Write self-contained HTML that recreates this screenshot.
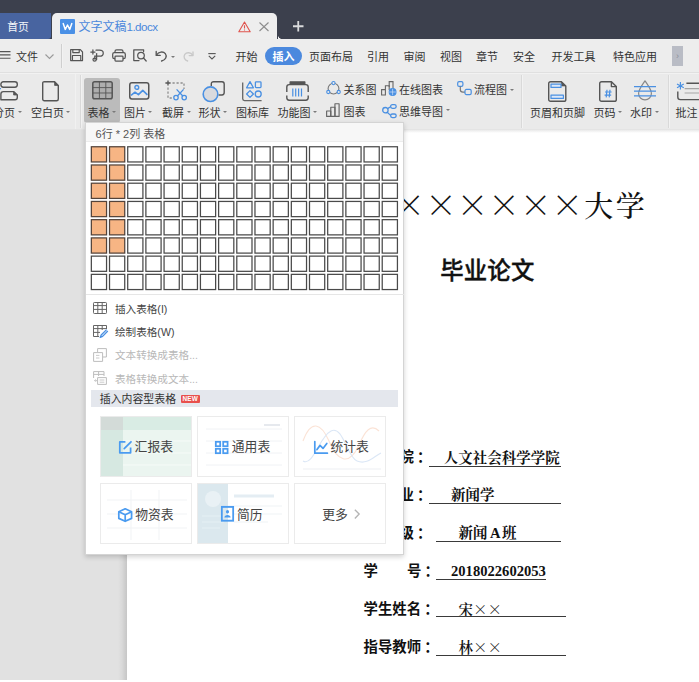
<!DOCTYPE html>
<html lang="zh-CN">
<head>
<meta charset="utf-8">
<title>文字文稿1.docx</title>
<style>
*{margin:0;padding:0;box-sizing:border-box}
html,body{width:699px;height:682px;overflow:hidden;background:#e1e1e1}
body{position:relative;font-family:"Liberation Sans","Noto Sans CJK SC",sans-serif;font-size:11px;color:#333}
.a{position:absolute;white-space:nowrap}
svg{position:absolute;overflow:visible}
#titlebar{left:0;top:0;width:699px;height:39px;background:#3c404d}
#home{left:0;top:12.5px;width:50.6px;height:26.3px;padding-top:1.4px;background:#4864a0;color:#f4f6fa;font-size:10.8px;line-height:26px;padding-left:7.2px;border-radius:0 0 3px 0}
#doctab{left:51.7px;top:12.6px;width:225.8px;height:27.4px;background:#eeeeee;border-radius:5px 5px 0 0}
#doctitle{left:78.5px;top:19px;font-size:12px;line-height:16px;color:#4a88dc}
#menubar{left:0;top:39px;width:699px;height:34px;background:#ededed;border-bottom:1px solid #e0e0e0}
#ribbon{left:0;top:73px;width:699px;height:57px;background:#eaeaea;border-top:1px solid #f2f2f2;border-bottom:1px solid #e4e4e4}
.m{top:48.5px;font-size:11px;line-height:16px;color:#333}
.r{font-size:11px;line-height:14px;color:#333}
#page{left:127.3px;top:130px;width:580px;height:560px;background:#fff}
#pshadow{left:118px;top:130px;width:9.3px;height:552px;background:linear-gradient(to right,rgba(0,0,0,0),rgba(0,0,0,0.03) 40%,rgba(0,0,0,0.12))}
#bottomstrip{left:0;top:679.8px;width:699px;height:3px;background:#fff}
#ptop{left:127.3px;top:130px;width:580px;height:3px;background:linear-gradient(to bottom,#eaeaea,#fff)}
#panel{left:84.6px;top:121.6px;width:319.4px;height:433px;background:#fff;border:1px solid #d4d4d4;box-shadow:0 2px 5px rgba(0,0,0,.18)}

.dd{width:0;height:0;border-left:2.2px solid transparent;border-right:2.2px solid transparent;border-top:2.6px solid #7a7a7a}
#pill{left:265px;top:46.5px;width:37px;height:18px;border-radius:9px;background:#4b89de}
#scrollbtn{left:672px;top:46px;width:11px;height:20px;background:#b9bcc5;color:#8d9099;font-size:9px;line-height:20px;text-align:center}
.vd{width:1px;background:#d9d9d9;box-shadow:1px 0 0 #f2f2f2}
#tblbtn{left:84px;top:78px;width:36.2px;height:44.6px;background:#bbbbbb;border-radius:3px}

#phead{left:85.6px;top:122.6px;width:317.4px;height:19px;background:#f7f7f7;border-bottom:1px solid #ececec;font-size:11px;line-height:23px;color:#555;padding-left:10px}
.pi{left:115px;font-size:10.6px;line-height:16px;color:#444}
.pi.dis{color:#b8b8b8}
#sect{left:90.5px;top:389.5px;width:307px;height:17.5px;background:#e4e7ed;font-size:10.9px;line-height:18px;color:#333;padding-left:9.3px}
#newb{left:180.8px;top:394.5px;width:18.8px;height:8.6px;background:#e8504d;border-radius:1px;color:#fff;font-size:6.4px;line-height:8.8px;font-weight:bold;text-align:center;letter-spacing:0.2px}
.th{width:92.2px;height:61px;border:1px solid #ebebeb;background:#fff;overflow:hidden}
.tl{font-size:12.8px;line-height:18px;color:#444}

.doc{font-family:"Liberation Serif","Noto Serif CJK SC",serif;color:#111}
#h1{left:330.1px;top:184.2px;font-size:29px;line-height:46px;height:46px;font-weight:500;display:flex;align-items:center}
#h1 i{display:block;width:31.6px;height:46px;text-align:center;font-style:normal}
#h1 i.x,.cx{font-family:"Noto Serif CJK SC","Liberation Serif",serif}
#h1 i.x{font-size:32px;font-weight:600;position:relative;top:-4.6px}
#h2{left:440.2px;top:255px;font-family:"Liberation Sans","Noto Sans CJK SC",sans-serif;font-weight:500;-webkit-text-stroke:0.35px #111;font-size:23.4px;letter-spacing:0.2px;line-height:32px;color:#111}
.lab{left:363.5px;font-family:"Liberation Sans","Noto Sans CJK SC",sans-serif;font-weight:bold;font-size:14.4px;line-height:20px;color:#111}
.val{font-size:14.5px;line-height:20px;font-weight:700}
.val.n{font-weight:600}
.ul{height:1.3px;background:#3a3a3a}
</style>
</head>
<body>
<div class="a" id="titlebar"></div>
<div class="a" id="home">首页</div>
<div class="a" id="doctab"></div>
<div class="a" style="left:277.5px;top:35px;width:4px;height:4px;background:radial-gradient(circle at 100% 0,rgba(238,238,238,0) 3.6px,#eeeeee 4.2px)"></div><div class="a" id="doctitle">文字文稿<span style="font-size:11.6px;letter-spacing:-0.55px">1.docx</span></div>
<div class="a" id="menubar"></div>
<div class="a" id="ribbon"></div>

<!-- tab icons -->
<svg style="left:60px;top:19px" width="15" height="15" viewBox="0 0 15 15"><rect width="15" height="15" rx="1" fill="#4a90e6"/><path d="M3.2 4.6 L5.3 10.4 L7.5 6 L9.7 10.4 L11.8 4.6" fill="none" stroke="#fff" stroke-width="1.5" stroke-linejoin="round" stroke-linecap="round"/></svg>
<svg style="left:238px;top:20.5px" width="13" height="11.5" viewBox="0 0 13 11.5"><path d="M6.5 1 L12.2 10.8 L0.8 10.8 Z" fill="none" stroke="#e0544e" stroke-width="1.1" stroke-linejoin="round"/><path d="M6.5 4.2 V7.6 M6.5 8.6 V9.6" stroke="#e0544e" stroke-width="1.1"/></svg>
<svg style="left:259px;top:22px" width="10" height="9.5" viewBox="0 0 10 9.5"><path d="M0.5 0.5 L9.5 9 M9.5 0.5 L0.5 9" stroke="#8c8c8c" stroke-width="1.1"/></svg>
<svg style="left:293px;top:21px" width="10.5" height="10.5" viewBox="0 0 10.5 10.5"><path d="M5.25 0 V10.5 M0 5.25 H10.5" stroke="#d9dadc" stroke-width="1.8"/></svg>
<!-- menu bar -->
<svg style="left:0;top:51px" width="11" height="8" viewBox="0 0 11 8"><path d="M0 0.6 H10.5 M0 3.9 H10.5 M0 7.2 H10.5" stroke="#555" stroke-width="1.1"/></svg>
<div class="a m" style="left:16px">文件</div>
<svg style="left:45px;top:53.5px" width="9" height="5.5" viewBox="0 0 9 5.5"><path d="M0.5 0.5 L4.5 4.5 L8.5 0.5" fill="none" stroke="#9a9a9a" stroke-width="1.1"/></svg>
<div class="a vd" style="left:61px;top:44px;height:24px;background:#cfcfcf"></div>
<div class="a" id="pill"></div>
<div class="a m" style="left:235.5px">开始</div>
<div class="a m" style="left:272.5px;color:#fff;font-weight:bold">插入</div>
<div class="a m" style="left:309px">页面布局</div>
<div class="a m" style="left:367px">引用</div>
<div class="a m" style="left:403.5px">审阅</div>
<div class="a m" style="left:440px">视图</div>
<div class="a m" style="left:476px">章节</div>
<div class="a m" style="left:513px">安全</div>
<div class="a m" style="left:551.5px">开发工具</div>
<div class="a m" style="left:613px">特色应用</div>
<div class="a" id="scrollbtn">&#8250;</div>

<!-- quick access -->
<svg style="left:69.6px;top:49.2px" width="13.2" height="12.3" viewBox="0 0 14 12.5" preserveAspectRatio="none" fill="none" stroke="#555" stroke-width="1.25" stroke-linejoin="round"><path d="M0.7 0.7 H11 L13.3 3 V11.8 H0.7 Z"/><path d="M3 0.7 V3.6 H9.8 V0.7"/><path d="M2.6 11.8 V6.6 H11.4 V11.8"/></svg>
<svg style="left:90px;top:49px" width="14" height="13" viewBox="0 0 14 13" fill="none" stroke="#555" stroke-width="1.25" stroke-linecap="round"><path d="M0.8 3 H5 M2.9 0.9 V5.1"/><path d="M6 1.2 H9.5 C14.5 1.2 14.5 7.2 9.5 7.2 H4.8 V10"/><circle cx="4.6" cy="10.6" r="1.6"/><path d="M6.6 10.6 V4.5"/></svg>
<svg style="left:111.5px;top:49px" width="14" height="13" viewBox="0 0 14 13" fill="none" stroke="#555" stroke-width="1.25" stroke-linejoin="round"><path d="M3 3.6 V2.4 C3 1.4 3.6 0.8 4.6 0.8 H9.4 C10.4 0.8 11 1.4 11 2.4 V3.6"/><rect x="0.7" y="3.6" width="12.6" height="6" rx="1.6"/><rect x="3" y="7.2" width="8" height="4.8" rx="0.8" fill="#ebebeb"/></svg>
<svg style="left:133px;top:49px" width="14" height="13" viewBox="0 0 14 13" fill="none" stroke="#555" stroke-width="1.25" stroke-linejoin="round" stroke-linecap="round"><path d="M6 11.6 H0.8 V0.8 H10.6 V2.6"/><circle cx="8" cy="6.6" r="3.3"/><path d="M10.5 9 L13.2 12"/></svg>
<svg style="left:155px;top:49.5px" width="13" height="12" viewBox="0 0 13 12" fill="none" stroke="#555" stroke-width="1.35" stroke-linecap="round" stroke-linejoin="round"><path d="M1.2 1.4 V5.4 H5.2"/><path d="M1.6 5 C3.5 1.6 8.2 1 10.3 3.6 C12.4 6.4 10.6 10 6.6 11"/></svg>
<div class="a dd" style="left:171px;top:55.5px"></div>
<svg style="left:183px;top:50.5px" width="11" height="11" viewBox="0 0 11 11" fill="none" stroke="#c9c9c9" stroke-width="1.35" stroke-linecap="round" stroke-linejoin="round"><path d="M10 0.8 V4.6 H6.2"/><path d="M9.6 4.2 C7.8 1.2 3.6 1 1.8 3.4 C0.2 5.8 1.4 8.8 4.6 10"/></svg>
<svg style="left:207.5px;top:53px" width="8" height="7" viewBox="0 0 8 7" fill="none" stroke="#555" stroke-width="1.1"><path d="M0.3 0.6 H7.7"/><path d="M0.8 2.8 L4 6 L7.2 2.8"/></svg>

<!-- ribbon -->
<div class="a vd" style="left:79.5px;top:75px;height:53px"></div>
<div class="a vd" style="left:521px;top:75px;height:53px"></div>
<div class="a vd" style="left:667.5px;top:75px;height:53px"></div>
<div class="a" id="tblbtn"></div>
<!-- fenye -->
<svg style="left:-3px;top:81px" width="22" height="20" viewBox="0 0 22 20" fill="none" stroke="#555" stroke-width="1.4"><rect x="3.9" y="0.8" width="16.4" height="5.4" rx="2.4"/><path d="M3.9 18.8 V13 C3.9 11.4 4.9 10.6 6.4 10.6 H16.6 L20.3 14 V16.6 C20.3 18 19.4 18.8 18 18.8 Z" stroke-linejoin="round"/><path d="M16.6 10.6 L20.3 14 H16.6 Z" fill="#555" stroke-width="0.8"/><path d="M0 7.6 L4 7.6" stroke="#4a90e2"/></svg>
<div class="a r" style="left:-7px;top:106.3px">分页</div>
<div class="a dd" style="left:17.5px;top:110.8px"></div>
<!-- blank page -->
<svg style="left:42px;top:81px" width="17" height="20.5" viewBox="0 0 17 20.5" fill="none" stroke="#555" stroke-width="1.4" stroke-linejoin="round"><path d="M0.7 2.4 C0.7 1.2 1.4 0.7 2.4 0.7 H12.6 L16.3 4.4 V18 C16.3 19.2 15.6 19.8 14.6 19.8 H2.4 C1.4 19.8 0.7 19.2 0.7 18 Z"/><path d="M12.6 0.7 V4.4 H16.3 Z" fill="#555" stroke-width="0.8"/></svg>
<div class="a r" style="left:31px;top:106.3px">空白页</div>
<div class="a dd" style="left:66px;top:110.8px"></div>
<div class="a" style="left:74.6px;top:74px;width:1.2px;height:55px;background:#f1f1f1"></div>
<!-- table -->
<svg style="left:91.6px;top:81.3px" width="21" height="18.6" viewBox="0 0 21 18.6" fill="none" stroke="#555"><rect x="0.8" y="0.8" width="19.4" height="17" rx="1.8" fill="#aeaeae" stroke-width="1.5"/><path d="M0.8 6.6 H20.2 M0.8 12 H20.2 M7.4 0.8 V17.8 M13.8 0.8 V17.8" stroke-width="0.9"/></svg>
<div class="a r" style="left:87.5px;top:106.3px">表格</div>
<div class="a dd" style="left:111.5px;top:110.8px"></div>
<!-- picture -->
<svg style="left:129px;top:81.8px" width="20.5" height="17.8" viewBox="0 0 20.5 17.8" fill="none"><rect x="0.75" y="0.75" width="19" height="16.3" rx="2.2" stroke="#555" stroke-width="1.5"/><circle cx="7.8" cy="5.4" r="1.9" stroke="#4a90e2" stroke-width="1.4"/><path d="M2 13.4 L6 10.2 L9.4 12.6 L13.8 8.4 L18.4 12.8" stroke="#4a90e2" stroke-width="1.6" stroke-linejoin="round"/></svg>
<div class="a r" style="left:124px;top:106.3px">图片</div>
<div class="a dd" style="left:148px;top:110.8px"></div>
<!-- screenshot -->
<svg style="left:165px;top:80px" width="23" height="21" viewBox="0 0 23 21" fill="none" stroke-width="1.3"><path d="M0.4 3 H5.6 M3 0.4 V5.6" stroke="#555"/><path d="M7.5 3 H19 V9" stroke="#8e8e8e" stroke-dasharray="2.2 1.8"/><path d="M3 7.6 V18 H7" stroke="#8e8e8e" stroke-dasharray="2.2 1.8"/><circle cx="11" cy="17.6" r="2.2" stroke="#4a90e2"/><circle cx="19.2" cy="17.6" r="2.2" stroke="#4a90e2"/><path d="M12.4 16 L18.6 9.4 M17.8 16 L11.6 9.4" stroke="#4a90e2"/></svg>
<div class="a r" style="left:162px;top:106.3px">截屏</div>
<div class="a dd" style="left:186.5px;top:110.8px"></div>
<!-- shapes -->
<svg style="left:202px;top:81px" width="24" height="22" viewBox="0 0 24 22" fill="none" stroke-width="1.4"><path d="M9.3 5 V3 C9.3 1.4 10.2 0.7 11.6 0.7 H20 C21.4 0.7 22.2 1.4 22.2 3 V11.6 C22.2 13.2 21.4 14 20 14 H16.5" stroke="#555"/><circle cx="8.5" cy="13.2" r="7.3" fill="#d9dade" stroke="#4a90e2" stroke-width="1.6"/></svg>
<div class="a r" style="left:198.5px;top:106.3px">形状</div>
<div class="a dd" style="left:223px;top:110.8px"></div>
<!-- icon lib -->
<svg style="left:242px;top:80px" width="20" height="21.5" viewBox="0 0 20 21.5" fill="none" stroke-width="1.3"><path d="M0.7 2.6 V18.8 C0.7 20 1.3 20.6 2.5 20.6 H19.6" stroke="#666"/><path d="M8 1.6 L11.4 7.8 H4.6 Z" stroke="#4a90e2" stroke-linejoin="round"/><rect x="13.4" y="1.8" width="5.6" height="5.8" rx="0.8" stroke="#4a90e2"/><path d="M8 10.6 L11.4 14 L8 17.4 L4.6 14 Z" stroke="#4a90e2" stroke-linejoin="round"/><circle cx="16.2" cy="14" r="3" stroke="#4a90e2"/></svg>
<div class="a r" style="left:236px;top:106.3px">图标库</div>
<!-- function chart -->
<svg style="left:285.5px;top:81px" width="23" height="20" viewBox="0 0 23 20" fill="none" stroke-width="1.4"><path d="M4.2 0.9 H18.8 V3.4 H4.2 Z" fill="#555" stroke="#555" stroke-linejoin="round"/><path d="M0.8 11 V6 C0.8 4.4 1.8 3.6 3.2 3.6 H19.8 C21.2 3.6 22.2 4.4 22.2 6 V11" stroke="#555"/><path d="M0.8 14.4 V16.8 C0.8 18.4 1.8 19.2 3.2 19.2 H19.8 C21.2 19.2 22.2 18.4 22.2 16.8 V14.4" stroke="#555"/><path d="M6.8 7.4 V15.6 M9.7 7.4 V15.6 M12.6 7.4 V15.6 M15.5 7.4 V15.6" stroke="#4a90e2" stroke-width="1.2"/></svg>
<div class="a r" style="left:277.5px;top:106.3px">功能图</div>
<div class="a dd" style="left:312.5px;top:110.8px"></div>

<!-- small ribbon items -->
<svg style="left:325.5px;top:81px" width="15" height="14" viewBox="0 0 15 14" fill="none" stroke-width="1.1"><circle cx="7.5" cy="7.6" r="5.4" stroke="#777"/><circle cx="7.5" cy="2.1" r="1.6" fill="#ebebeb" stroke="#4a90e2"/><circle cx="2.3" cy="11" r="1.6" fill="#ebebeb" stroke="#4a90e2"/><circle cx="12.7" cy="11" r="1.6" fill="#ebebeb" stroke="#4a90e2"/></svg>
<div class="a r" style="left:343.5px;top:82.5px">关系图</div>
<svg style="left:381px;top:80.5px" width="16" height="15" viewBox="0 0 16 15" fill="none" stroke-width="1.1"><path d="M0.6 14 V8.6 H4.4 V14 Z M4.4 14 V4.8 H8.2 V9" stroke="#666"/><path d="M8.2 6 V0.6 H12 V8" stroke="#666"/><circle cx="11.6" cy="11" r="3.4" fill="#4a90e2" stroke="#4a90e2"/><path d="M8.4 11 H14.8 M11.6 7.8 V14.2" stroke="#cfe0f7" stroke-width="0.7"/></svg>
<div class="a r" style="left:399px;top:82.5px">在线图表</div>
<svg style="left:456.5px;top:81px" width="15" height="14.5" viewBox="0 0 15 14.5" fill="none" stroke-width="1.2"><rect x="0.7" y="0.7" width="5.2" height="4.6" rx="1.4" stroke="#4a90e2"/><path d="M3.3 5.4 V8.6 C3.3 10.6 4.4 11.2 6 11.2 H8" stroke="#777"/><rect x="8" y="8.4" width="6.2" height="5.2" rx="1.4" stroke="#4a90e2"/></svg>
<div class="a r" style="left:474px;top:82.5px">流程图</div>
<div class="a dd" style="left:510px;top:88.5px"></div>
<svg style="left:325.6px;top:103.2px" width="15.6" height="14.2" viewBox="0 0 15 13.5" fill="none" stroke="#666" stroke-width="1.1" stroke-linejoin="round"><path d="M0.6 12.8 V7.6 H4.6 V12.8 Z"/><path d="M4.6 12.8 V4 H8.6 V12.8 Z"/><path d="M8.6 12.8 V0.6 H12.6 V12.8 Z"/></svg>
<div class="a r" style="left:343.5px;top:105px">图表</div>
<svg style="left:382px;top:104px" width="15" height="14.5" viewBox="0 0 15 14.5" fill="none" stroke="#4a90e2" stroke-width="1.3"><circle cx="3.4" cy="6.2" r="2.7"/><rect x="8.6" y="0.7" width="5.6" height="3.6" rx="1.8"/><rect x="8.6" y="10" width="5.6" height="3.6" rx="1.8"/><path d="M5.6 4.6 L8.6 2.8 M5.2 8.2 L8.6 11.4"/></svg>
<div class="a r" style="left:399px;top:105px">思维导图</div>
<div class="a dd" style="left:446px;top:109.4px"></div>
<!-- header footer -->
<svg style="left:547.5px;top:80.5px" width="18.5" height="21" viewBox="0 0 18.5 21" fill="none" stroke-width="1.4" stroke-linejoin="round"><path d="M0.7 2.6 C0.7 1.4 1.4 0.7 2.6 0.7 H13.4 L17.8 5 V18.4 C17.8 19.6 17.1 20.3 15.9 20.3 H2.6 C1.4 20.3 0.7 19.6 0.7 18.4 Z" stroke="#555"/><path d="M13.4 0.7 V5 H17.8 Z" fill="#555" stroke="#555" stroke-width="0.6"/><rect x="3" y="3.2" width="10" height="3.2" fill="#dde8f8" stroke="#4a90e2" stroke-width="1.2"/><rect x="3" y="14.2" width="12.4" height="3.2" fill="#dde8f8" stroke="#4a90e2" stroke-width="1.2"/></svg>
<div class="a r" style="left:530px;top:106.3px">页眉和页脚</div>
<svg style="left:599px;top:80.5px" width="18" height="21" viewBox="0 0 18 21" fill="none" stroke-width="1.4" stroke-linejoin="round"><path d="M0.7 2.6 C0.7 1.4 1.4 0.7 2.6 0.7 H12.4 L17.3 5.6 V18.4 C17.3 19.6 16.6 20.3 15.4 20.3 H2.6 C1.4 20.3 0.7 19.6 0.7 18.4 Z" stroke="#555"/><path d="M12.4 0.7 V5.6 H17.3" stroke="#555"/><path d="M6 11 H12.6 M5.6 14.2 H12.2 M8 8.8 L7.2 16.4 M11 8.8 L10.2 16.4" stroke="#4a90e2" stroke-width="1.2"/></svg>
<div class="a r" style="left:593.5px;top:106.3px">页码</div>
<div class="a dd" style="left:617.5px;top:110.8px"></div>
<svg style="left:634px;top:79.5px" width="22" height="20.5" viewBox="0 0 22 20.5" fill="none" stroke-width="1.2"><path d="M11 0.8 C8 5.4 4.6 9.4 4.6 13.4 C4.6 17.2 7.4 19.8 11 19.8 C14.6 19.8 17.4 17.2 17.4 13.4 C17.4 9.4 14 5.4 11 0.8 Z" stroke="#888" stroke-linejoin="round"/><path d="M0 6.6 H22 M0 11.2 H22 M0 15.8 H22" stroke="#4a90e2"/></svg>
<div class="a r" style="left:630px;top:106.3px">水印</div>
<div class="a dd" style="left:654.5px;top:110.8px"></div>
<svg style="left:675.5px;top:81.5px" width="26" height="20" viewBox="0 0 26 20" fill="none" stroke-width="1.3"><path d="M4.4 0 V7.6 M1 1.9 L7.8 5.7 M7.8 1.9 L1 5.7" stroke="#4a90e2" stroke-width="1.15"/><path d="M10.4 1.2 H26 M1.8 9.4 V15 C1.8 16.6 2.8 17.6 4.4 17.6 H26" stroke="#555" stroke-width="1.4"/><path d="M8.6 6.6 H26 M8.6 11 H26" stroke="#a5a5a5" stroke-width="1.1"/></svg>
<div class="a r" style="left:675.5px;top:106.3px">批注</div>
<div class="a" id="pshadow"></div><div class="a" id="page"></div><div class="a" id="ptop"></div>

<div class="a doc" id="h1"><i class="x">×</i><i class="x">×</i><i class="x">×</i><i class="x">×</i><i class="x">×</i><i class="x">×</i><i class="x">×</i><i class="x">×</i><i>大</i><i>学</i></div>
<div class="a" id="h2">毕业论文</div>
<div class="a lab" style="left:356px;top:447px">学<span style="display:inline-block;width:29px"></span>院<span style="margin-left:3.2px">：</span></div>
<div class="a lab" style="left:356px;top:485px">专<span style="display:inline-block;width:29px"></span>业<span style="margin-left:3.2px">：</span></div>
<div class="a lab" style="left:356px;top:523px">班<span style="display:inline-block;width:29px"></span>级<span style="margin-left:3.2px">：</span></div>
<div class="a lab" style="top:561px">学<span style="display:inline-block;width:29px"></span>号<span style="margin-left:3.2px">：</span></div>
<div class="a lab" style="top:599px">学生姓名<span style="margin-left:3.2px">：</span></div>
<div class="a lab" style="top:637px">指导教师<span style="margin-left:3.2px">：</span></div>
<div class="a doc val" style="left:443.8px;top:447.5px">人文社会科学学院</div>
<div class="a ul" style="left:429px;top:465.7px;width:131.6px"></div>
<div class="a doc val" style="left:451px;top:485.3px">新闻学</div>
<div class="a ul" style="left:429px;top:502.8px;width:131.6px"></div>
<div class="a doc val" style="left:458.6px;top:523px;word-spacing:-1.2px">新闻 A 班</div>
<div class="a ul" style="left:436.3px;top:540.7px;width:124.3px"></div>
<div class="a doc val n" style="left:451px;top:561px;font-size:14.6px">2018022602053</div>
<div class="a ul" style="left:436.3px;top:578.8px;width:109.5px;height:1.6px"></div>
<div class="a doc val n" style="left:458.6px;top:599px">宋<span class="cx">××</span></div>
<div class="a ul" style="left:436.3px;top:616.2px;width:130.2px"></div>
<div class="a doc val n" style="left:458.6px;top:637px">林<span class="cx">××</span></div>
<div class="a ul" style="left:436.3px;top:654.7px;width:130.2px"></div>
<div class="a" id="panel"></div>
<div class="a" id="phead">6行 * 2列 表格</div>
<svg style="left:0;top:0" width="699" height="682" viewBox="0 0 699 682" stroke-width="1.25"><rect x="91.35" y="146.75" width="15.20" height="15.20" fill="#f7b584" stroke="#54433a"/><rect x="109.53" y="146.75" width="15.20" height="15.20" fill="#f7b584" stroke="#54433a"/><rect x="127.71" y="146.75" width="15.20" height="15.20" fill="#fff" stroke="#4a4a4a"/><rect x="145.89" y="146.75" width="15.20" height="15.20" fill="#fff" stroke="#4a4a4a"/><rect x="164.07" y="146.75" width="15.20" height="15.20" fill="#fff" stroke="#4a4a4a"/><rect x="182.25" y="146.75" width="15.20" height="15.20" fill="#fff" stroke="#4a4a4a"/><rect x="200.43" y="146.75" width="15.20" height="15.20" fill="#fff" stroke="#4a4a4a"/><rect x="218.61" y="146.75" width="15.20" height="15.20" fill="#fff" stroke="#4a4a4a"/><rect x="236.79" y="146.75" width="15.20" height="15.20" fill="#fff" stroke="#4a4a4a"/><rect x="254.97" y="146.75" width="15.20" height="15.20" fill="#fff" stroke="#4a4a4a"/><rect x="273.15" y="146.75" width="15.20" height="15.20" fill="#fff" stroke="#4a4a4a"/><rect x="291.33" y="146.75" width="15.20" height="15.20" fill="#fff" stroke="#4a4a4a"/><rect x="309.51" y="146.75" width="15.20" height="15.20" fill="#fff" stroke="#4a4a4a"/><rect x="327.69" y="146.75" width="15.20" height="15.20" fill="#fff" stroke="#4a4a4a"/><rect x="345.87" y="146.75" width="15.20" height="15.20" fill="#fff" stroke="#4a4a4a"/><rect x="364.05" y="146.75" width="15.20" height="15.20" fill="#fff" stroke="#4a4a4a"/><rect x="382.23" y="146.75" width="15.20" height="15.20" fill="#fff" stroke="#4a4a4a"/><rect x="91.35" y="164.98" width="15.20" height="15.20" fill="#f7b584" stroke="#54433a"/><rect x="109.53" y="164.98" width="15.20" height="15.20" fill="#f7b584" stroke="#54433a"/><rect x="127.71" y="164.98" width="15.20" height="15.20" fill="#fff" stroke="#4a4a4a"/><rect x="145.89" y="164.98" width="15.20" height="15.20" fill="#fff" stroke="#4a4a4a"/><rect x="164.07" y="164.98" width="15.20" height="15.20" fill="#fff" stroke="#4a4a4a"/><rect x="182.25" y="164.98" width="15.20" height="15.20" fill="#fff" stroke="#4a4a4a"/><rect x="200.43" y="164.98" width="15.20" height="15.20" fill="#fff" stroke="#4a4a4a"/><rect x="218.61" y="164.98" width="15.20" height="15.20" fill="#fff" stroke="#4a4a4a"/><rect x="236.79" y="164.98" width="15.20" height="15.20" fill="#fff" stroke="#4a4a4a"/><rect x="254.97" y="164.98" width="15.20" height="15.20" fill="#fff" stroke="#4a4a4a"/><rect x="273.15" y="164.98" width="15.20" height="15.20" fill="#fff" stroke="#4a4a4a"/><rect x="291.33" y="164.98" width="15.20" height="15.20" fill="#fff" stroke="#4a4a4a"/><rect x="309.51" y="164.98" width="15.20" height="15.20" fill="#fff" stroke="#4a4a4a"/><rect x="327.69" y="164.98" width="15.20" height="15.20" fill="#fff" stroke="#4a4a4a"/><rect x="345.87" y="164.98" width="15.20" height="15.20" fill="#fff" stroke="#4a4a4a"/><rect x="364.05" y="164.98" width="15.20" height="15.20" fill="#fff" stroke="#4a4a4a"/><rect x="382.23" y="164.98" width="15.20" height="15.20" fill="#fff" stroke="#4a4a4a"/><rect x="91.35" y="183.21" width="15.20" height="15.20" fill="#f7b584" stroke="#54433a"/><rect x="109.53" y="183.21" width="15.20" height="15.20" fill="#f7b584" stroke="#54433a"/><rect x="127.71" y="183.21" width="15.20" height="15.20" fill="#fff" stroke="#4a4a4a"/><rect x="145.89" y="183.21" width="15.20" height="15.20" fill="#fff" stroke="#4a4a4a"/><rect x="164.07" y="183.21" width="15.20" height="15.20" fill="#fff" stroke="#4a4a4a"/><rect x="182.25" y="183.21" width="15.20" height="15.20" fill="#fff" stroke="#4a4a4a"/><rect x="200.43" y="183.21" width="15.20" height="15.20" fill="#fff" stroke="#4a4a4a"/><rect x="218.61" y="183.21" width="15.20" height="15.20" fill="#fff" stroke="#4a4a4a"/><rect x="236.79" y="183.21" width="15.20" height="15.20" fill="#fff" stroke="#4a4a4a"/><rect x="254.97" y="183.21" width="15.20" height="15.20" fill="#fff" stroke="#4a4a4a"/><rect x="273.15" y="183.21" width="15.20" height="15.20" fill="#fff" stroke="#4a4a4a"/><rect x="291.33" y="183.21" width="15.20" height="15.20" fill="#fff" stroke="#4a4a4a"/><rect x="309.51" y="183.21" width="15.20" height="15.20" fill="#fff" stroke="#4a4a4a"/><rect x="327.69" y="183.21" width="15.20" height="15.20" fill="#fff" stroke="#4a4a4a"/><rect x="345.87" y="183.21" width="15.20" height="15.20" fill="#fff" stroke="#4a4a4a"/><rect x="364.05" y="183.21" width="15.20" height="15.20" fill="#fff" stroke="#4a4a4a"/><rect x="382.23" y="183.21" width="15.20" height="15.20" fill="#fff" stroke="#4a4a4a"/><rect x="91.35" y="201.44" width="15.20" height="15.20" fill="#f7b584" stroke="#54433a"/><rect x="109.53" y="201.44" width="15.20" height="15.20" fill="#f7b584" stroke="#54433a"/><rect x="127.71" y="201.44" width="15.20" height="15.20" fill="#fff" stroke="#4a4a4a"/><rect x="145.89" y="201.44" width="15.20" height="15.20" fill="#fff" stroke="#4a4a4a"/><rect x="164.07" y="201.44" width="15.20" height="15.20" fill="#fff" stroke="#4a4a4a"/><rect x="182.25" y="201.44" width="15.20" height="15.20" fill="#fff" stroke="#4a4a4a"/><rect x="200.43" y="201.44" width="15.20" height="15.20" fill="#fff" stroke="#4a4a4a"/><rect x="218.61" y="201.44" width="15.20" height="15.20" fill="#fff" stroke="#4a4a4a"/><rect x="236.79" y="201.44" width="15.20" height="15.20" fill="#fff" stroke="#4a4a4a"/><rect x="254.97" y="201.44" width="15.20" height="15.20" fill="#fff" stroke="#4a4a4a"/><rect x="273.15" y="201.44" width="15.20" height="15.20" fill="#fff" stroke="#4a4a4a"/><rect x="291.33" y="201.44" width="15.20" height="15.20" fill="#fff" stroke="#4a4a4a"/><rect x="309.51" y="201.44" width="15.20" height="15.20" fill="#fff" stroke="#4a4a4a"/><rect x="327.69" y="201.44" width="15.20" height="15.20" fill="#fff" stroke="#4a4a4a"/><rect x="345.87" y="201.44" width="15.20" height="15.20" fill="#fff" stroke="#4a4a4a"/><rect x="364.05" y="201.44" width="15.20" height="15.20" fill="#fff" stroke="#4a4a4a"/><rect x="382.23" y="201.44" width="15.20" height="15.20" fill="#fff" stroke="#4a4a4a"/><rect x="91.35" y="219.67" width="15.20" height="15.20" fill="#f7b584" stroke="#54433a"/><rect x="109.53" y="219.67" width="15.20" height="15.20" fill="#f7b584" stroke="#54433a"/><rect x="127.71" y="219.67" width="15.20" height="15.20" fill="#fff" stroke="#4a4a4a"/><rect x="145.89" y="219.67" width="15.20" height="15.20" fill="#fff" stroke="#4a4a4a"/><rect x="164.07" y="219.67" width="15.20" height="15.20" fill="#fff" stroke="#4a4a4a"/><rect x="182.25" y="219.67" width="15.20" height="15.20" fill="#fff" stroke="#4a4a4a"/><rect x="200.43" y="219.67" width="15.20" height="15.20" fill="#fff" stroke="#4a4a4a"/><rect x="218.61" y="219.67" width="15.20" height="15.20" fill="#fff" stroke="#4a4a4a"/><rect x="236.79" y="219.67" width="15.20" height="15.20" fill="#fff" stroke="#4a4a4a"/><rect x="254.97" y="219.67" width="15.20" height="15.20" fill="#fff" stroke="#4a4a4a"/><rect x="273.15" y="219.67" width="15.20" height="15.20" fill="#fff" stroke="#4a4a4a"/><rect x="291.33" y="219.67" width="15.20" height="15.20" fill="#fff" stroke="#4a4a4a"/><rect x="309.51" y="219.67" width="15.20" height="15.20" fill="#fff" stroke="#4a4a4a"/><rect x="327.69" y="219.67" width="15.20" height="15.20" fill="#fff" stroke="#4a4a4a"/><rect x="345.87" y="219.67" width="15.20" height="15.20" fill="#fff" stroke="#4a4a4a"/><rect x="364.05" y="219.67" width="15.20" height="15.20" fill="#fff" stroke="#4a4a4a"/><rect x="382.23" y="219.67" width="15.20" height="15.20" fill="#fff" stroke="#4a4a4a"/><rect x="91.35" y="237.90" width="15.20" height="15.20" fill="#f7b584" stroke="#54433a"/><rect x="109.53" y="237.90" width="15.20" height="15.20" fill="#f7b584" stroke="#54433a"/><rect x="127.71" y="237.90" width="15.20" height="15.20" fill="#fff" stroke="#4a4a4a"/><rect x="145.89" y="237.90" width="15.20" height="15.20" fill="#fff" stroke="#4a4a4a"/><rect x="164.07" y="237.90" width="15.20" height="15.20" fill="#fff" stroke="#4a4a4a"/><rect x="182.25" y="237.90" width="15.20" height="15.20" fill="#fff" stroke="#4a4a4a"/><rect x="200.43" y="237.90" width="15.20" height="15.20" fill="#fff" stroke="#4a4a4a"/><rect x="218.61" y="237.90" width="15.20" height="15.20" fill="#fff" stroke="#4a4a4a"/><rect x="236.79" y="237.90" width="15.20" height="15.20" fill="#fff" stroke="#4a4a4a"/><rect x="254.97" y="237.90" width="15.20" height="15.20" fill="#fff" stroke="#4a4a4a"/><rect x="273.15" y="237.90" width="15.20" height="15.20" fill="#fff" stroke="#4a4a4a"/><rect x="291.33" y="237.90" width="15.20" height="15.20" fill="#fff" stroke="#4a4a4a"/><rect x="309.51" y="237.90" width="15.20" height="15.20" fill="#fff" stroke="#4a4a4a"/><rect x="327.69" y="237.90" width="15.20" height="15.20" fill="#fff" stroke="#4a4a4a"/><rect x="345.87" y="237.90" width="15.20" height="15.20" fill="#fff" stroke="#4a4a4a"/><rect x="364.05" y="237.90" width="15.20" height="15.20" fill="#fff" stroke="#4a4a4a"/><rect x="382.23" y="237.90" width="15.20" height="15.20" fill="#fff" stroke="#4a4a4a"/><rect x="91.35" y="256.13" width="15.20" height="15.20" fill="#fff" stroke="#4a4a4a"/><rect x="109.53" y="256.13" width="15.20" height="15.20" fill="#fff" stroke="#4a4a4a"/><rect x="127.71" y="256.13" width="15.20" height="15.20" fill="#fff" stroke="#4a4a4a"/><rect x="145.89" y="256.13" width="15.20" height="15.20" fill="#fff" stroke="#4a4a4a"/><rect x="164.07" y="256.13" width="15.20" height="15.20" fill="#fff" stroke="#4a4a4a"/><rect x="182.25" y="256.13" width="15.20" height="15.20" fill="#fff" stroke="#4a4a4a"/><rect x="200.43" y="256.13" width="15.20" height="15.20" fill="#fff" stroke="#4a4a4a"/><rect x="218.61" y="256.13" width="15.20" height="15.20" fill="#fff" stroke="#4a4a4a"/><rect x="236.79" y="256.13" width="15.20" height="15.20" fill="#fff" stroke="#4a4a4a"/><rect x="254.97" y="256.13" width="15.20" height="15.20" fill="#fff" stroke="#4a4a4a"/><rect x="273.15" y="256.13" width="15.20" height="15.20" fill="#fff" stroke="#4a4a4a"/><rect x="291.33" y="256.13" width="15.20" height="15.20" fill="#fff" stroke="#4a4a4a"/><rect x="309.51" y="256.13" width="15.20" height="15.20" fill="#fff" stroke="#4a4a4a"/><rect x="327.69" y="256.13" width="15.20" height="15.20" fill="#fff" stroke="#4a4a4a"/><rect x="345.87" y="256.13" width="15.20" height="15.20" fill="#fff" stroke="#4a4a4a"/><rect x="364.05" y="256.13" width="15.20" height="15.20" fill="#fff" stroke="#4a4a4a"/><rect x="382.23" y="256.13" width="15.20" height="15.20" fill="#fff" stroke="#4a4a4a"/><rect x="91.35" y="274.36" width="15.20" height="15.20" fill="#fff" stroke="#4a4a4a"/><rect x="109.53" y="274.36" width="15.20" height="15.20" fill="#fff" stroke="#4a4a4a"/><rect x="127.71" y="274.36" width="15.20" height="15.20" fill="#fff" stroke="#4a4a4a"/><rect x="145.89" y="274.36" width="15.20" height="15.20" fill="#fff" stroke="#4a4a4a"/><rect x="164.07" y="274.36" width="15.20" height="15.20" fill="#fff" stroke="#4a4a4a"/><rect x="182.25" y="274.36" width="15.20" height="15.20" fill="#fff" stroke="#4a4a4a"/><rect x="200.43" y="274.36" width="15.20" height="15.20" fill="#fff" stroke="#4a4a4a"/><rect x="218.61" y="274.36" width="15.20" height="15.20" fill="#fff" stroke="#4a4a4a"/><rect x="236.79" y="274.36" width="15.20" height="15.20" fill="#fff" stroke="#4a4a4a"/><rect x="254.97" y="274.36" width="15.20" height="15.20" fill="#fff" stroke="#4a4a4a"/><rect x="273.15" y="274.36" width="15.20" height="15.20" fill="#fff" stroke="#4a4a4a"/><rect x="291.33" y="274.36" width="15.20" height="15.20" fill="#fff" stroke="#4a4a4a"/><rect x="309.51" y="274.36" width="15.20" height="15.20" fill="#fff" stroke="#4a4a4a"/><rect x="327.69" y="274.36" width="15.20" height="15.20" fill="#fff" stroke="#4a4a4a"/><rect x="345.87" y="274.36" width="15.20" height="15.20" fill="#fff" stroke="#4a4a4a"/><rect x="364.05" y="274.36" width="15.20" height="15.20" fill="#fff" stroke="#4a4a4a"/><rect x="382.23" y="274.36" width="15.20" height="15.20" fill="#fff" stroke="#4a4a4a"/></svg>
<div class="a" style="left:86px;top:293.5px;width:318px;height:1px;background:#e6e6e6"></div>
<svg style="left:93px;top:302px" width="14" height="12" viewBox="0 0 14 12" fill="none" stroke="#666" stroke-width="1"><rect x="0.5" y="0.5" width="13" height="11" rx="0.8"/><path d="M0.5 3.6 H13.5 M0.5 7.4 H13.5 M4.8 0.5 V11.5 M9.2 0.5 V11.5"/></svg>
<div class="a pi" style="top:300.6px">插入表格(I)</div>
<svg style="left:93px;top:324.5px" width="15" height="13" viewBox="0 0 15 13" fill="none" stroke-width="1"><path d="M6 11.5 H0.5 V0.5 H13.5 V4" stroke="#666"/><path d="M0.5 3.6 H13.5 M0.5 7.4 H7 M4.8 0.5 V11.5 M9.2 0.5 V5" stroke="#666"/><path d="M13.6 4.6 L8.2 10 L7.2 12.4 L9.6 11.4 L14.8 6" stroke="#4a90e2" stroke-width="1.3" stroke-linejoin="round"/></svg>
<div class="a pi" style="top:323.6px">绘制表格(W)</div>
<svg style="left:93px;top:347.5px" width="14" height="14" viewBox="0 0 14 14" fill="none" stroke="#bdbdbd" stroke-width="1"><path d="M4.6 4 V0.6 H13.4 V9 H10"/><path d="M0.6 4.6 H9.6 V13.4 H0.6 Z"/><path d="M3 7.4 H6.4 M3 10 H6.4" stroke-width="0.8"/></svg>
<div class="a pi dis" style="top:347px">文本转换成表格...</div>
<svg style="left:93px;top:371px" width="14" height="14" viewBox="0 0 14 14" fill="none" stroke="#bdbdbd" stroke-width="1"><path d="M0.6 7 V0.6 H11 V5"/><path d="M0.6 3.4 H11 M5.6 0.6 V5"/><path d="M4.6 6.6 H13.4 V13.4 H4.6 Z"/><path d="M1 9.6 H3.6 M2.4 8.4 L3.6 9.6 L2.4 10.8 M6.6 9 H11.4 M6.6 11.2 H11.4" stroke-width="0.8"/></svg>
<div class="a pi dis" style="top:370.5px">表格转换成文本...</div>
<div class="a" id="sect">插入内容型表格</div>
<div class="a" id="newb">NEW</div>
<!-- thumbnails -->
<div class="a th" style="left:99.6px;top:416.3px;background:#ebf5f0"><div class="a" style="left:0;top:0;width:22px;height:61px;background:#d6e8e1"></div><div class="a" style="left:0;top:0;width:92px;height:12.5px;background:#d9ece4"></div><div class="a" style="left:0;top:0;width:22px;height:12.5px;background:#d3dbd8"></div><svg style="left:0;top:0" width="92" height="61" viewBox="0 0 92 61" fill="none" stroke="#f6fbf8" stroke-width="1"><path d="M22 24 H92 M22 36 H92 M22 48 H92"/></svg></div>
<div class="a th" style="left:197px;top:416.3px"><svg style="left:0;top:0" width="92" height="61" viewBox="0 0 92 61" fill="none" stroke="#f0f2f5" stroke-width="1"><path d="M8 12 H84 M8 24 H84 M8 36 H84 M8 48 H84"/><path d="M66 8 H82" stroke="#e6e9ee" stroke-width="2"/></svg></div>
<div class="a th" style="left:294.2px;top:416.3px"><svg style="left:0;top:0" width="92" height="61" viewBox="0 0 92 61" fill="none" stroke-width="1.1"><path d="M8 24 C16 2 26 6 34 24 C42 44 54 50 64 28 C70 14 76 6 84 14" stroke="#fbe3d6"/><path d="M8 44 C18 50 24 20 36 14 C48 8 52 40 62 44 C72 48 78 40 86 36" stroke="#dbe7f6"/><path d="M8 52 H86" stroke="#eef0f3"/></svg></div>
<div class="a th" style="left:99.6px;top:483.2px"><svg style="left:0;top:0" width="92" height="61" viewBox="0 0 92 61" fill="none" stroke="#f1f3f5" stroke-width="1"><path d="M6 16 H86 M6 30 H86 M6 44 H86 M30 6 V56 M58 6 V56"/></svg></div>
<div class="a th" style="left:197px;top:483.2px"><div class="a" style="left:0;top:0;width:30px;height:61px;background:#dbe8ee"></div><svg style="left:0;top:0" width="92" height="61" viewBox="0 0 92 61" fill="none"><circle cx="15" cy="15" r="8" fill="#e9f1f5"/><path d="M36 12 H76" stroke="#e4edf3" stroke-width="3"/><path d="M36 22 H84 M36 30 H84 M36 38 H70" stroke="#f0f3f6" stroke-width="1.2"/><path d="M4 32 H26 M4 38 H26 M4 44 H22" stroke="#e6eff4" stroke-width="1.2"/></svg></div>
<div class="a th" style="left:294.2px;top:483.2px"></div>
<svg style="left:119.3px;top:440.6px" width="13" height="12.6" viewBox="0 0 13 12.6" fill="none" stroke="#4a9bf0" stroke-width="1.75" stroke-linejoin="round"><path d="M6.4 0.9 H0.8 V11.8 H11.6 V6.4"/><path d="M5.2 7.6 L12 0.8" stroke-linecap="round"/></svg>
<div class="a tl" style="left:134.6px;top:438.3px">汇报表</div>
<svg style="left:214.6px;top:440.6px" width="13.4" height="13" viewBox="0 0 13.4 13" fill="none" stroke="#4a9bf0" stroke-width="1.75"><rect x="0.8" y="0.8" width="4.4" height="4.4"/><rect x="8.2" y="0.8" width="4.4" height="4.4"/><rect x="0.8" y="7.8" width="4.4" height="4.4"/><rect x="8.2" y="7.8" width="4.4" height="4.4"/></svg>
<div class="a tl" style="left:231.8px;top:438.3px">通用表</div>
<svg style="left:313.5px;top:440.6px" width="14" height="13" viewBox="0 0 14 13" fill="none" stroke="#4a9bf0" stroke-width="1.7" stroke-linejoin="round" stroke-linecap="round"><path d="M0.8 0.6 V12.2 H13.4"/><path d="M3 8.6 L6 4.4 L9 7.4 L12.8 2.4"/></svg>
<div class="a tl" style="left:330.5px;top:438.3px">统计表</div>
<svg style="left:117.6px;top:507.8px" width="14.4" height="14" viewBox="0 0 14.4 14" fill="none" stroke="#4a9bf0" stroke-width="1.7" stroke-linejoin="round"><path d="M7.2 0.8 L13.6 3.8 V10.4 L7.2 13.3 L0.8 10.4 V3.8 Z"/><path d="M0.8 3.8 L7.2 6.8 L13.6 3.8 M7.2 6.8 V13.3"/></svg>
<div class="a tl" style="left:135.2px;top:505.6px">物资表</div>
<svg style="left:221.3px;top:506.4px" width="13" height="15.6" viewBox="0 0 12.4 14" preserveAspectRatio="none" fill="none" stroke="#4a9bf0" stroke-width="1.7"><rect x="0.8" y="0.8" width="10.8" height="12.4"/><circle cx="6.2" cy="5.2" r="1.5" fill="#4a9bf0" stroke="none"/><path d="M3.2 10.4 C3.2 7.4 9.2 7.4 9.2 10.4 Z" fill="#4a9bf0" stroke="none"/></svg>
<div class="a tl" style="left:237px;top:505.6px">简历</div>
<div class="a tl" style="left:322.2px;top:505.6px">更多</div>
<svg style="left:353.8px;top:508.6px" width="6" height="10.2" viewBox="0 0 5 9" fill="none" stroke="#b5b5b5" stroke-width="1.2"><path d="M0.6 0.6 L4.4 4.5 L0.6 8.4"/></svg>

<div class="a" id="bottomstrip"></div>
</body>
</html>
